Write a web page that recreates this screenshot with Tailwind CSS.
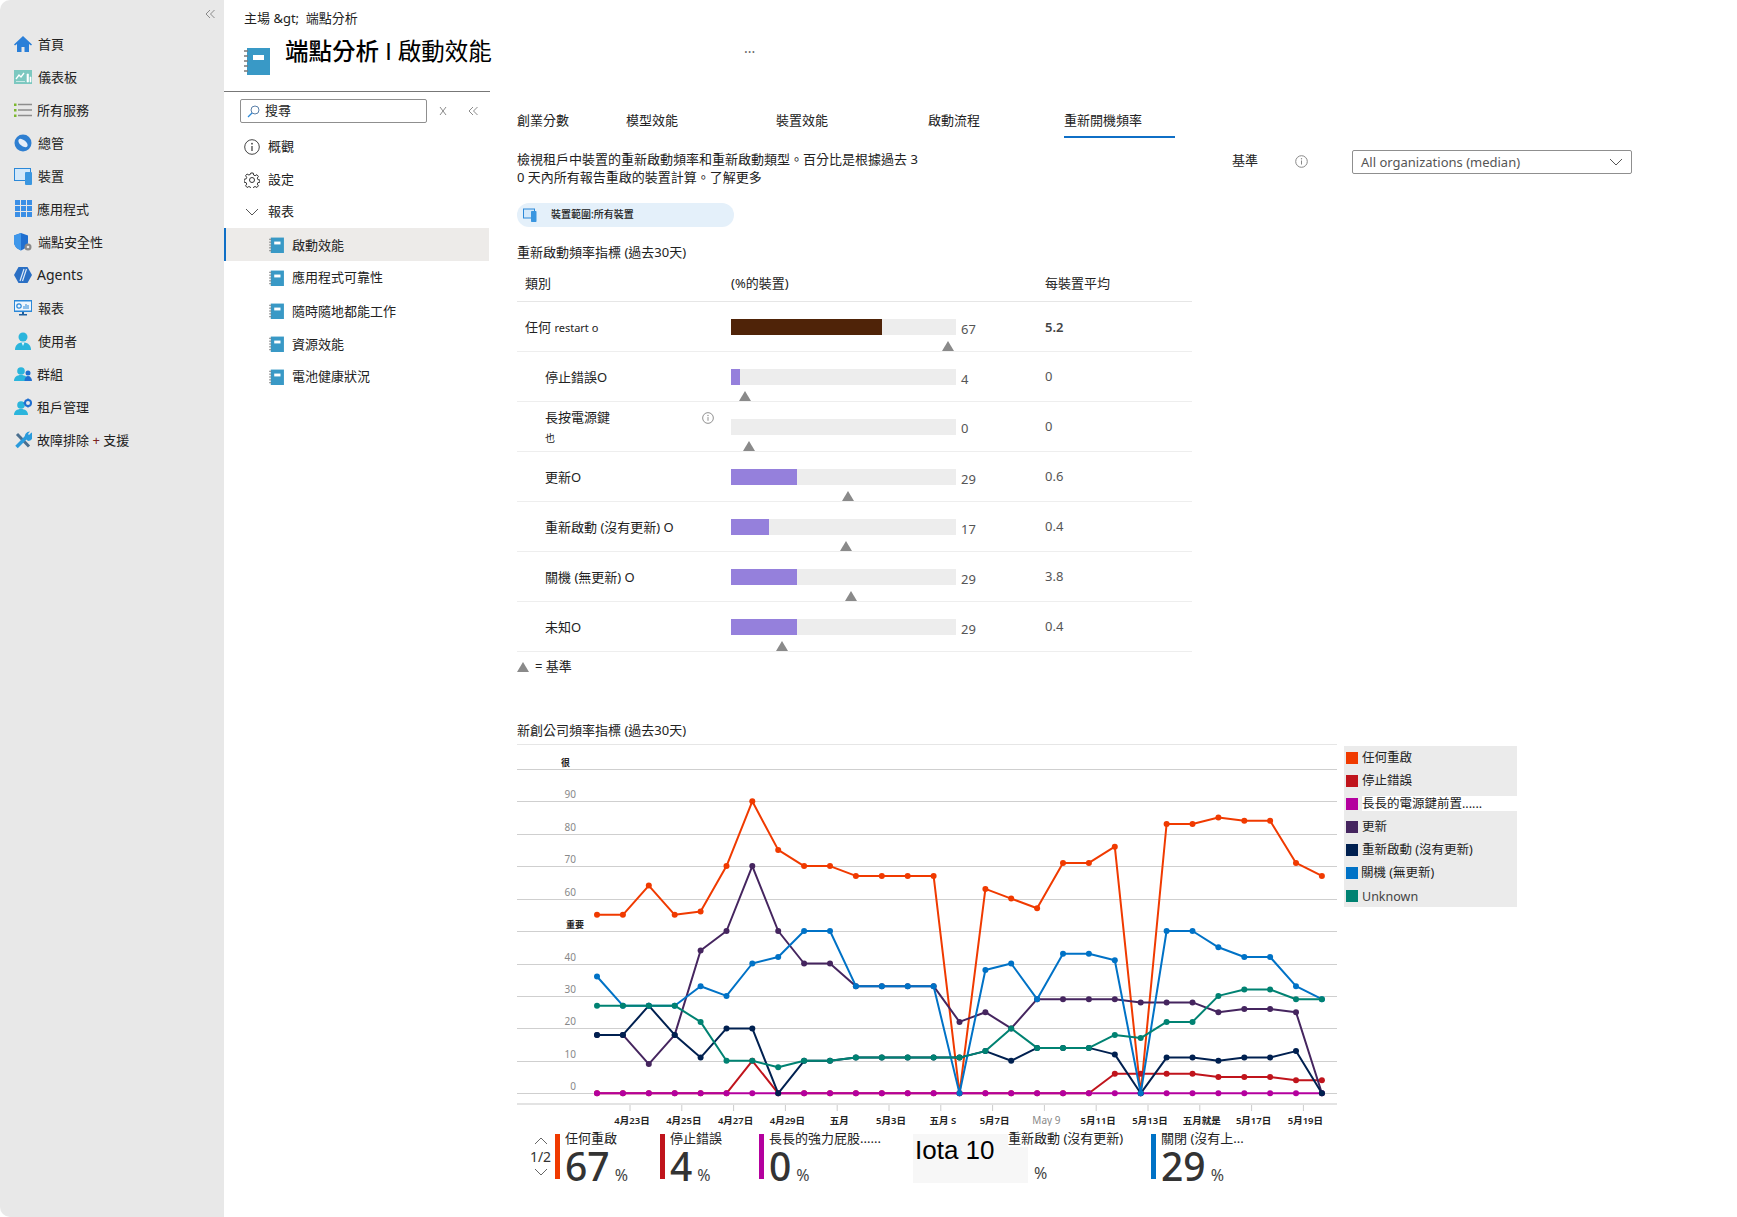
<!DOCTYPE html>
<html lang="zh-Hant">
<head>
  <meta charset="UTF-8" />
  <title>端點分析 | 啟動效能</title>
  <script src="https://cdn.jsdelivr.net/npm/@tailwindcss/browser@4"></script>
</head>
<body class="bg-white font-['Noto_Sans','Noto_Sans_CJK_TC',sans-serif] text-[13px] text-[#222] overflow-hidden">
  <svg class="hidden">
    <symbol id="notebook" viewBox="0 0 26 28">
      <rect x="3" y="1" width="23" height="27" fill="#3999c6" />
      <rect x="9" y="8" width="11" height="5" fill="#fff" />
      <path d="M0 4h4M0 9h4M0 14h4M0 19h4M0 24h4" stroke="#7a7a7a" stroke-width="1.6" />
    </symbol>
  </svg>

  <div class="flex h-[1217px] w-[1737px]">
    <!-- left nav -->
    <aside class="w-[224px] shrink-0 bg-[#e8e8e8] rounded-l-[10px]">
      <div class="h-[27px] flex justify-end items-center pr-[8px]">
        <svg width="12" height="12" viewBox="0 0 12 12" fill="none" stroke="#8a8a8a"><path d="M6 2 2 6l4 4M10.500 2l-4 4 4 4" /></svg>
      </div>
      <nav class="leading-[18px]">
        <a class="h-[33px] flex items-center pl-[14px] gap-[6px]">
          <svg width="18" height="18" viewBox="0 0 18 18"><path d="M9 1 0 9.500l1 1L3 9v8h4.500v-5h3v5H15V9l2 1.500 1-1z" fill="#2a7fd8" /></svg>
          <span>首頁</span>
        </a>
        <a class="h-[33px] flex items-center pl-[14px] gap-[6px]">
          <svg width="18" height="18" viewBox="0 0 18 18"><rect y="2" width="18" height="14" fill="#7cc8c0" /><path d="M2 11l3-4 2 2 3-4" stroke="#fff" stroke-width="1.300" fill="none" /><path d="M2 13.500h9M13 6h1.500v8H13zM16 9h1v5h-1z" stroke="#fff" fill="#fff" stroke-width=".6" /></svg>
          <span>儀表板</span>
        </a>
        <a class="h-[33px] flex items-center pl-[14px] gap-[5px]">
          <svg width="18" height="18" viewBox="0 0 18 18"><path d="M4 3.500h14M4 9h14M4 14.500h14" stroke="#8d8d8d" stroke-width="1.500" /><path d="M0 2.500h2.500V5H0zM0 8h2.500v2.500H0zM0 13.500h2.500V16H0z" fill="#7cb82f" /></svg>
          <span>所有服務</span>
        </a>
        <a class="h-[33px] flex items-center pl-[14px] gap-[6px]">
          <svg width="18" height="18" viewBox="0 0 18 18"><circle cx="9" cy="9" r="8.500" fill="#2f7fd1" /><ellipse cx="9" cy="9" rx="5.500" ry="3" transform="rotate(40 9 9)" fill="#e6eef8" /></svg>
          <span>總管</span>
        </a>
        <a class="h-[33px] flex items-center pl-[14px] gap-[6px]">
          <svg width="18" height="18" viewBox="0 0 18 18"><rect x=".5" y="1.500" width="16" height="12" fill="#d3e8fa" stroke="#2b88d8" /><rect x="11" y="5" width="7" height="13" rx="1" fill="#3a96e0" /></svg>
          <span>裝置</span>
        </a>
        <a class="h-[33px] flex items-center pl-[15px] gap-[5px]">
          <svg width="17" height="17" viewBox="0 0 17 17" fill="#3b8fe6"><path d="M0 0h5v5H0zM6 0h5v5H6zM12 0h5v5h-5zM0 6h5v5H0zM6 6h5v5H6zM12 6h5v5h-5zM0 12h5v5H0zM6 12h5v5H6zM12 12h5v5h-5z" /></svg>
          <span>應用程式</span>
        </a>
        <a class="h-[33px] flex items-center pl-[14px] gap-[6px]">
          <svg width="18" height="18" viewBox="0 0 18 18"><path d="M7 0 0 2.500V9c0 4 3 7 7 8.500 4-1.500 7-4.500 7-8.500V2.500z" fill="#1f6fd0" /><path d="M7 0v17.500C3 16 0 13 0 9V2.500z" fill="#3f97ea" /><circle cx="14" cy="14" r="3.500" fill="#8a8a8a" /><circle cx="14" cy="14" r="1.300" fill="#e8e8e8" /></svg>
          <span>端點安全性</span>
        </a>
        <a class="h-[33px] flex items-center pl-[14px] gap-[5px]">
          <svg width="18" height="18" viewBox="0 0 18 18"><path d="M4.500 1h9L18 9l-4.500 8h-9L0 9z" fill="#2a6fc4" /><path d="M10 3 6 15M12.500 3l-4 12" stroke="#dbe8f7" stroke-width="1.200" /></svg>
          <span class="text-[14px]">Agents</span>
        </a>
        <a class="h-[33px] flex items-center pl-[14px] gap-[6px]">
          <svg width="18" height="18" viewBox="0 0 18 18"><rect y="1" width="18" height="12" fill="#2b88d8" /><rect x="1" y="2.500" width="16" height="9" fill="#eef6fd" /><circle cx="5" cy="7" r="2.200" fill="none" stroke="#2b88d8" stroke-width="1.200" /><path d="M10 10V7M12 10V5M14 10V6" stroke="#2b88d8" /><path d="M8 13h2v2h3v1.500H5V15h3z" fill="#1f5f9e" /></svg>
          <span>報表</span>
        </a>
        <a class="h-[33px] flex items-center pl-[14px] gap-[6px]">
          <svg width="18" height="18" viewBox="0 0 18 18"><circle cx="9" cy="5" r="4.500" fill="#2bb5dc" /><path d="M1 18c0-5 3-7.500 8-7.500s8 2.500 8 7.500z" fill="#2bb5dc" /><path d="M7.500 10.500h3L9 14z" fill="#e6f7fc" /></svg>
          <span>使用者</span>
        </a>
        <a class="h-[33px] flex items-center pl-[14px] gap-[5px]">
          <svg width="18" height="18" viewBox="0 0 18 18"><circle cx="7" cy="6" r="3.800" fill="#2bb5dc" /><path d="M0 16c0-4 3-6 7-6s7 2 7 6z" fill="#2bb5dc" /><circle cx="14" cy="8" r="2.500" fill="#1f6fd0" /><path d="M10.500 16c0-3 1.500-5 3.500-5s4 2 4 5z" fill="#1f6fd0" /></svg>
          <span>群組</span>
        </a>
        <a class="h-[33px] flex items-center pl-[14px] gap-[5px]">
          <svg width="18" height="18" viewBox="0 0 18 18"><circle cx="7" cy="7" r="3.800" fill="#2bb5dc" /><path d="M0 17c0-4 3-6 7-6s7 2 7 6z" fill="#2bb5dc" /><circle cx="14" cy="5" r="3" fill="none" stroke="#1f6fd0" stroke-width="2" /><path d="M14 .5v2M14 7.500v2M9.500 5h2M16.500 5h2" stroke="#1f6fd0" stroke-width="1.500" /></svg>
          <span>租戶管理</span>
        </a>
        <a class="h-[33px] flex items-center pl-[14px] gap-[5px]">
          <svg width="18" height="18" viewBox="0 0 18 18"><path d="M3 3l12 12.500" stroke="#4a6f8f" stroke-width="3" /><path d="M2.500 16 12 6.500" stroke="#2a9bdc" stroke-width="3.500" /><path d="M17.500 1.500 15 4l-1-1 2-2.500a5 5 0 0 0-5 6.500l3 3a5 5 0 0 0 3.500-8.500z" fill="#2a9bdc" /></svg>
          <span>故障排除 <span class="text-[#7a2020]">+</span> 支援</span>
        </a>
      </nav>
    </aside>

    <!-- blade menu -->
    <section class="w-[266px] shrink-0">
      <div class="h-[37px] pl-[20px] flex items-center text-[13px]">主場 &amp;gt;&nbsp; 端點分析</div>
      <div class="h-[55px] border-b border-[#777] pl-[20px] flex items-start gap-[15px] whitespace-nowrap">
        <svg width="26" height="28" class="mt-[10px] shrink-0"><use href="#notebook" /></svg>
        <h1 class="-mt-[3px] text-[23.5px] leading-[34px] font-medium text-black">端點分析 <span class="font-['Liberation_Sans',sans-serif] font-normal">I</span> <span class="font-normal">啟動效能</span></h1>
      </div>
      <div class="mt-[7px] pl-[16px] flex items-center">
        <div class="w-[187px] h-[24px] border border-[#8f8f8f] rounded-[2px] flex items-center pl-[6px] gap-[5px]">
          <svg width="13" height="13" viewBox="0 0 13 13" fill="none"><circle cx="8" cy="5" r="4" stroke="#5a7fa8" /><path d="M5 8 1 12" stroke="#2b88d8" stroke-width="1.300" /></svg>
          <span class="leading-[18px] -mt-[2px]">搜尋</span>
        </div>
        <svg width="10" height="10" viewBox="0 0 10 10" class="ml-[11px]" fill="none" stroke="#8a8a8a"><path d="M2 1l6 8M8 1 2 9" /></svg>
        <svg width="12" height="12" viewBox="0 0 12 12" class="ml-[19px]" fill="none" stroke="#8a8a8a"><path d="M6 2 2 6l4 4M10.500 2l-4 4 4 4" /></svg>
      </div>
      <ul class="mt-[7px] leading-[18px]">
        <li class="h-[33px] flex items-center pl-[20px] gap-[8px]">
          <svg width="16" height="16" viewBox="0 0 16 16" fill="none"><circle cx="8" cy="8" r="7.300" stroke="#444" /><path d="M8 7v5" stroke="#444" stroke-width="1.300" /><circle cx="8" cy="4.700" r=".9" fill="#444" /></svg>
          <span class="-mt-[2px]">概觀</span>
        </li>
        <li class="h-[33px] flex items-center pl-[20px] gap-[8px]">
          <svg width="16" height="16" viewBox="0 0 16 16" fill="none" stroke="#333"><circle cx="8" cy="8" r="2.500" /><path d="M6.800 1h2.400l.4 2 1.500.7 1.800-1 1.500 1.700-1.100 1.700.6 1.500 2 .4v2.200l-2 .4-.6 1.500 1.100 1.700-1.500 1.700-1.800-1-1.500.7-.4 2H6.800l-.4-2-1.500-.7-1.800 1-1.500-1.700 1.100-1.700-.6-1.500-2-.4V7.300l2-.4.600-1.500-1.100-1.700 1.500-1.700 1.800 1 1.500-.7z" stroke-width="1" /></svg>
          <span class="-mt-[2px]">設定</span>
        </li>
        <li class="h-[32px] flex items-center pl-[21px] gap-[9px]">
          <svg width="14" height="8" viewBox="0 0 14 8" fill="none" stroke="#555"><path d="M1 1l6 6 6-6" /></svg>
          <span class="-mt-[2px]">報表</span>
        </li>
        <li class="h-[33px] w-[265px] bg-[#edebe9] border-l-2 border-[#0f6fc6] flex items-center pl-[43px] gap-[8px]">
          <svg width="15" height="16"><use href="#notebook" /></svg>
          <span>啟動效能</span>
        </li>
        <li class="h-[33px] flex items-center pl-[45px] gap-[8px]">
          <svg width="15" height="16"><use href="#notebook" /></svg>
          <span class="-mt-[2px]">應用程式可靠性</span>
        </li>
        <li class="h-[33px] flex items-center pl-[45px] gap-[8px]">
          <svg width="15" height="16"><use href="#notebook" /></svg>
          <span>隨時隨地都能工作</span>
        </li>
        <li class="h-[33px] flex items-center pl-[45px] gap-[8px]">
          <svg width="15" height="16"><use href="#notebook" /></svg>
          <span>資源效能</span>
        </li>
        <li class="h-[33px] flex items-center pl-[45px] gap-[8px]">
          <svg width="15" height="16"><use href="#notebook" /></svg>
          <span class="-mt-[2px]">電池健康狀況</span>
        </li>
      </ul>
    </section>

    <!-- main -->
    <main class="flex-1 pl-[27px] leading-[18px]">
      <div class="h-[100px] pl-[227px] pt-[39px] text-[#666] text-[14px]">...</div>

      <div class="h-[38px] flex whitespace-nowrap">
        <div class="w-[109px] pt-[11px]">創業分數</div>
        <div class="w-[150px] pt-[11px]">模型效能</div>
        <div class="w-[152px] pt-[11px]">裝置效能</div>
        <div class="w-[136px] pt-[11px]">啟動流程</div>
        <div class="w-[111px] pt-[11px] border-b-2 border-[#0f6fc6]">重新開機頻率</div>
      </div>

      <div class="mt-[12px] h-[37px] flex">
        <p class="w-[715px]">檢視租戶中裝置的重新啟動頻率和重新啟動類型。百分比是根據過去 3<br />0 天內所有報告重啟的裝置計算。了解更多</p>
        <div class="w-[63px] pt-[1px]">基準</div>
        <div class="w-[57px] pt-[5px]">
          <svg width="13" height="13" viewBox="0 0 13 13" fill="none"><circle cx="6.500" cy="6.500" r="5.800" stroke="#888" /><path d="M6.500 5.500v4" stroke="#888" /><circle cx="6.500" cy="3.800" r=".7" fill="#888" /></svg>
        </div>
        <div class="w-[280px] h-[24px] border border-[#8f8f8f] rounded-[2px] flex items-center justify-between pl-[8px] pr-[8px] text-[#555]">
          <span>All organizations (median)</span>
          <svg width="14" height="8" viewBox="0 0 14 8" fill="none" stroke="#555"><path d="M1 1l6 6 6-6" /></svg>
        </div>
      </div>

      <div class="mt-[16px] w-[217px] h-[24px] rounded-full bg-[#e4f0fa] flex items-center pl-[6px] gap-[14px] text-[10px] font-medium">
        <svg width="14" height="14" viewBox="0 0 14 14"><rect x=".5" y="1" width="11" height="9" fill="#d3e8fa" stroke="#2b88d8" /><rect x="8" y="3" width="5.500" height="11" rx=".7" fill="#3a96e0" /></svg>
        <span class="-mt-[2px]">裝置範圍:所有裝置</span>
      </div>

      <h2 class="mt-[16px] font-normal">重新啟動頻率指標 (過去30天)</h2>

      <div class="w-[675px]">
        <div class="h-[41px] pt-[13px] flex border-b border-[#e6e6e6]">
          <div class="w-[214px] pl-[8px]">類別</div>
          <div class="w-[314px]">(%的裝置)</div>
          <div>每裝置平均</div>
        </div>

        <div class="h-[50px] flex border-b border-[#eee]">
          <div class="w-[214px] pl-[8px] pt-[16px]">任何 <span class="text-[11px]">restart o</span></div>
          <div class="w-[225px] h-[49px] pt-[17px] relative">
            <div class="h-[16px] bg-[#ededed]"><div class="h-full w-[67%] bg-[#4f2308]"></div></div>
            <div class="absolute left-[211px] top-[39px] border-x-[6px] border-b-[10px] border-x-transparent border-b-[#8a8a8a]"></div>
          </div>
          <div class="w-[89px] pl-[5px] pt-[18px] text-[#555]">67</div>
          <div class="pt-[16px] font-semibold text-[#444]">5.2</div>
        </div>

        <div class="h-[50px] flex border-b border-[#eee]">
          <div class="w-[214px] pl-[28px] pt-[16px]">停止錯誤O</div>
          <div class="w-[225px] h-[49px] pt-[17px] relative">
            <div class="h-[16px] bg-[#ededed]"><div class="h-full w-[4%] bg-[#9580dc]"></div></div>
            <div class="absolute left-[8px] top-[39px] border-x-[6px] border-b-[10px] border-x-transparent border-b-[#8a8a8a]"></div>
          </div>
          <div class="w-[89px] pl-[5px] pt-[18px] text-[#555]">4</div>
          <div class="pt-[15px] text-[#555]">0</div>
        </div>

        <div class="h-[50px] flex border-b border-[#eee]">
          <div class="w-[214px] pl-[28px] pt-[6px] relative">
            <div>長按電源鍵</div>
            <div class="text-[10px] mt-[3px]">也</div>
            <svg width="12" height="12" viewBox="0 0 13 13" fill="none" class="absolute left-[185px] top-[10px]"><circle cx="6.500" cy="6.500" r="5.800" stroke="#888" /><path d="M6.500 5.500v4" stroke="#888" /><circle cx="6.500" cy="3.800" r=".7" fill="#888" /></svg>
          </div>
          <div class="w-[225px] h-[49px] pt-[17px] relative">
            <div class="h-[16px] bg-[#ededed]"></div>
            <div class="absolute left-[12px] top-[39px] border-x-[6px] border-b-[10px] border-x-transparent border-b-[#8a8a8a]"></div>
          </div>
          <div class="w-[89px] pl-[5px] pt-[17px] text-[#555]">0</div>
          <div class="pt-[15px] text-[#555]">0</div>
        </div>

        <div class="h-[50px] flex border-b border-[#eee]">
          <div class="w-[214px] pl-[28px] pt-[16px]">更新O</div>
          <div class="w-[225px] h-[49px] pt-[17px] relative">
            <div class="h-[16px] bg-[#ededed]"><div class="h-full w-[29.500%] bg-[#9580dc]"></div></div>
            <div class="absolute left-[111px] top-[39px] border-x-[6px] border-b-[10px] border-x-transparent border-b-[#8a8a8a]"></div>
          </div>
          <div class="w-[89px] pl-[5px] pt-[18px] text-[#555]">29</div>
          <div class="pt-[15px] text-[#555]">0.6</div>
        </div>

        <div class="h-[50px] flex border-b border-[#eee]">
          <div class="w-[214px] pl-[28px] pt-[16px]">重新啟動 (沒有更新) O</div>
          <div class="w-[225px] h-[49px] pt-[17px] relative">
            <div class="h-[16px] bg-[#ededed]"><div class="h-full w-[17%] bg-[#9580dc]"></div></div>
            <div class="absolute left-[109px] top-[39px] border-x-[6px] border-b-[10px] border-x-transparent border-b-[#8a8a8a]"></div>
          </div>
          <div class="w-[89px] pl-[5px] pt-[18px] text-[#555]">17</div>
          <div class="pt-[15px] text-[#555]">0.4</div>
        </div>

        <div class="h-[50px] flex border-b border-[#eee]">
          <div class="w-[214px] pl-[28px] pt-[16px]">關機 (無更新) O</div>
          <div class="w-[225px] h-[49px] pt-[17px] relative">
            <div class="h-[16px] bg-[#ededed]"><div class="h-full w-[29.500%] bg-[#9580dc]"></div></div>
            <div class="absolute left-[114px] top-[39px] border-x-[6px] border-b-[10px] border-x-transparent border-b-[#8a8a8a]"></div>
          </div>
          <div class="w-[89px] pl-[5px] pt-[18px] text-[#555]">29</div>
          <div class="pt-[15px] text-[#555]">3.8</div>
        </div>

        <div class="h-[50px] flex border-b border-[#eee]">
          <div class="w-[214px] pl-[28px] pt-[16px]">未知O</div>
          <div class="w-[225px] h-[49px] pt-[17px] relative">
            <div class="h-[16px] bg-[#ededed]"><div class="h-full w-[29.500%] bg-[#9580dc]"></div></div>
            <div class="absolute left-[45px] top-[39px] border-x-[6px] border-b-[10px] border-x-transparent border-b-[#8a8a8a]"></div>
          </div>
          <div class="w-[89px] pl-[5px] pt-[18px] text-[#555]">29</div>
          <div class="pt-[15px] text-[#555]">0.4</div>
        </div>
      </div>

      <div class="mt-[5px] flex items-center gap-[6px]">
        <div class="mt-[2px] border-x-[6px] border-b-[10px] border-x-transparent border-b-[#8a8a8a]"></div>
        <span>= 基準</span>
      </div>

      <h2 class="mt-[46px] font-normal">新創公司頻率指標 (過去30天)</h2>

      <div class="mt-[4px] h-[383px] flex items-start">
        <svg id="chart" width="821" height="383" viewBox="517 743 821 383" class="shrink-0"></svg>
        <ul class="ml-[6px] mt-[3px] w-[173px] bg-[#ebebeb] text-[12.5px]">
          <li class="h-[23px] flex items-center"><i class="w-[12px] h-[12px] ml-[2px] mr-[4px] bg-[#f03a00]"></i>任何重啟</li>
          <li class="h-[23px] flex items-center"><i class="w-[12px] h-[12px] ml-[2px] mr-[4px] bg-[#c0141c]"></i>停止錯誤</li>
          <li class="h-[23px] flex items-center"><i class="w-[12px] h-[12px] ml-[2px] mr-[4px] bg-[#b4009e]"></i><span class="flex-1 bg-white leading-[15px] h-[15px]">長長的電源鍵前置......</span></li>
          <li class="h-[23px] flex items-center"><i class="w-[12px] h-[12px] ml-[2px] mr-[4px] bg-[#45255f]"></i>更新</li>
          <li class="h-[23px] flex items-center"><i class="w-[12px] h-[12px] ml-[2px] mr-[4px] bg-[#002050]"></i>重新啟動 (沒有更新)</li>
          <li class="h-[23px] flex items-center"><i class="w-[12px] h-[12px] ml-[2px] mr-[3px] bg-[#0072c6]"></i>關機 (無更新)</li>
          <li class="h-[23px] flex items-center"><i class="w-[12px] h-[12px] ml-[2px] mr-[4px] bg-[#008272]"></i><span class="text-[#444] mt-[2px]">Unknown</span></li>
        </ul>
      </div>

      <!-- kpi strip -->
      <div class="mt-[8px] flex items-start whitespace-nowrap">
        <div class="w-[38px] pl-[9px] flex flex-col items-center text-[14px] text-[#333]">
          <svg width="14" height="8" viewBox="0 0 14 8" fill="none" stroke="#666" class="mt-[3px]"><path d="M1 7l6-6 6 6" /></svg>
          <span class="mt-[3px] mb-[2px]">1/2</span>
          <svg width="14" height="8" viewBox="0 0 14 8" fill="none" stroke="#666"><path d="M1 1l6 6 6-6" /></svg>
        </div>

        <div class="w-[105px] flex gap-[5px]">
          <div class="w-[5px] h-[45px] bg-[#f03a00]"></div>
          <div>
            <div class="-mt-[5px]">任何重啟</div>
            <div class="mt-[3px] flex items-baseline gap-[5px] leading-[32px]"><b class="text-[39px] font-medium text-[#333]">67</b><span class="text-[16px] text-[#444]">%</span></div>
          </div>
        </div>
        <div class="w-[99px] flex gap-[5px]">
          <div class="w-[5px] h-[45px] bg-[#c0141c]"></div>
          <div>
            <div class="-mt-[5px]">停止錯誤</div>
            <div class="mt-[3px] flex items-baseline gap-[5px] leading-[32px]"><b class="text-[39px] font-medium text-[#333]">4</b><span class="text-[16px] text-[#444]">%</span></div>
          </div>
        </div>
        <div class="w-[154px] flex gap-[5px]">
          <div class="w-[5px] h-[45px] bg-[#b4009e]"></div>
          <div>
            <div class="-mt-[5px]">長長的強力屁股......</div>
            <div class="mt-[3px] flex items-baseline gap-[5px] leading-[32px]"><b class="text-[39px] font-medium text-[#333]">0</b><span class="text-[16px] text-[#444]">%</span></div>
          </div>
        </div>
        <div class="w-[238px] relative">
          <div class="w-[115px] h-[49px] bg-[#f7f7f7] pl-[2px] font-['Liberation_Sans',sans-serif] text-[26px] leading-[32px] text-black">Iota 10</div>
          <div class="absolute left-[95px] -top-[5px] bg-white pr-[2px]">重新啟動 (沒有更新)</div>
          <span class="absolute left-[121px] top-[30px] text-[16px] text-[#444]">%</span>
        </div>
        <div class="flex gap-[5px]">
          <div class="w-[5px] h-[45px] bg-[#0072c6]"></div>
          <div>
            <div class="-mt-[5px]">關閉 (沒有上...</div>
            <div class="mt-[3px] flex items-baseline gap-[5px] leading-[32px]"><b class="text-[39px] font-medium text-[#333]">29</b><span class="text-[16px] text-[#444]">%</span></div>
          </div>
        </div>
      </div>
    </main>
  </div>

  <script>
    // chart is drawn in page coordinates, viewBox matches where the svg sits
    const series = [
      ['#f03a00', [55,55,64,55,56,70,90,75,70,70,67,67,67,67,0,63,60,57,71,71,76,0,83,83,85,84,84,71,67]],
      ['#c0141c', [0,0,0,0,0,0,10,0,0,0,0,0,0,0,0,0,0,0,0,0,6,6,6,6,5,5,5,4,4]],
      ['#b4009e', new Array(29).fill(0)],
      ['#45255f', [18,18,9,18,44,50,70,50,40,40,33,33,33,33,22,25,20,29,29,29,29,28,28,28,25,26,26,25,0]],
      ['#002050', [18,18,27,18,11,20,20,0,10,10,11,11,11,11,11,13,10,14,14,14,12,0,11,11,10,11,11,13,0]],
      ['#0072c6', [36,27,27,27,33,30,40,42,50,50,33,33,33,33,0,38,40,29,43,43,41,0,50,50,45,42,42,33,29]],
      ['#008272', [27,27,27,27,22,10,10,8,10,10,11,11,11,11,11,13,20,14,14,14,18,17,22,22,30,32,32,29,29]]
    ];
    const yLabels = ['0','10','20','30','40','','60','70','80','90',''];
    const xLabels = ['4月23日','4月25日','4月27日','4月29日','五月','5月3日','五月 S','5月7日','May 9','5月11日','5月13日','五月就是','5月17日','5月19日'];
    const px = i => 597 + i * 25.89;
    const py = v => 1093.3 - v * 3.245;
    const font = 'font-family="Noto Sans,Noto Sans CJK TC,sans-serif"';

    let out = '<path d="M517 744.500H1337" stroke="#e6e6e6" />';
    for (let v = 0; v <= 100; v += 10) {
      const y = Math.round(py(v)) + 0.5;
      out += `<path d="M517 ${y}H1337" stroke="#cfcfcf" />`;
      out += `<text x="576" y="${y - 3.5}" text-anchor="end" font-size="10" fill="#888" ${font}>${yLabels[v / 10]}</text>`;
    }
    out += `<text x="570" y="766" text-anchor="end" font-size="9" font-weight="700" fill="#222" ${font}>很</text>`;
    out += `<text x="584" y="928" text-anchor="end" font-size="9" font-weight="700" fill="#222" ${font}>重要</text>`;
    out += '<path d="M517 1104H1337" stroke="#e3e3e3" stroke-width="2" />';
    xLabels.forEach((label, i) => {
      const x = 630 + i * 51.8;
      const muted = label === 'May 9';
      out += `<path d="M${x} 1105v6" stroke="#ccc" />`;
      out += `<text x="${x + 2}" y="1124" text-anchor="middle" font-size="${muted ? 10 : 9.500}" font-weight="${muted ? 400 : 600}" fill="${muted ? '#888' : '#222'}" ${font}>${label}</text>`;
    });
    series.forEach(([color, values]) => {
      const pts = values.map((v, i) => `${px(i).toFixed(1)},${py(v).toFixed(1)}`).join(' ');
      out += `<polyline points="${pts}" fill="none" stroke="${color}" stroke-width="2" stroke-linejoin="round" />`;
      values.forEach((v, i) => {
        out += `<circle cx="${px(i).toFixed(1)}" cy="${py(v).toFixed(1)}" r="3" fill="${color}" />`;
      });
    });
    document.getElementById('chart').innerHTML = out;
  </script>
</body>
</html>
